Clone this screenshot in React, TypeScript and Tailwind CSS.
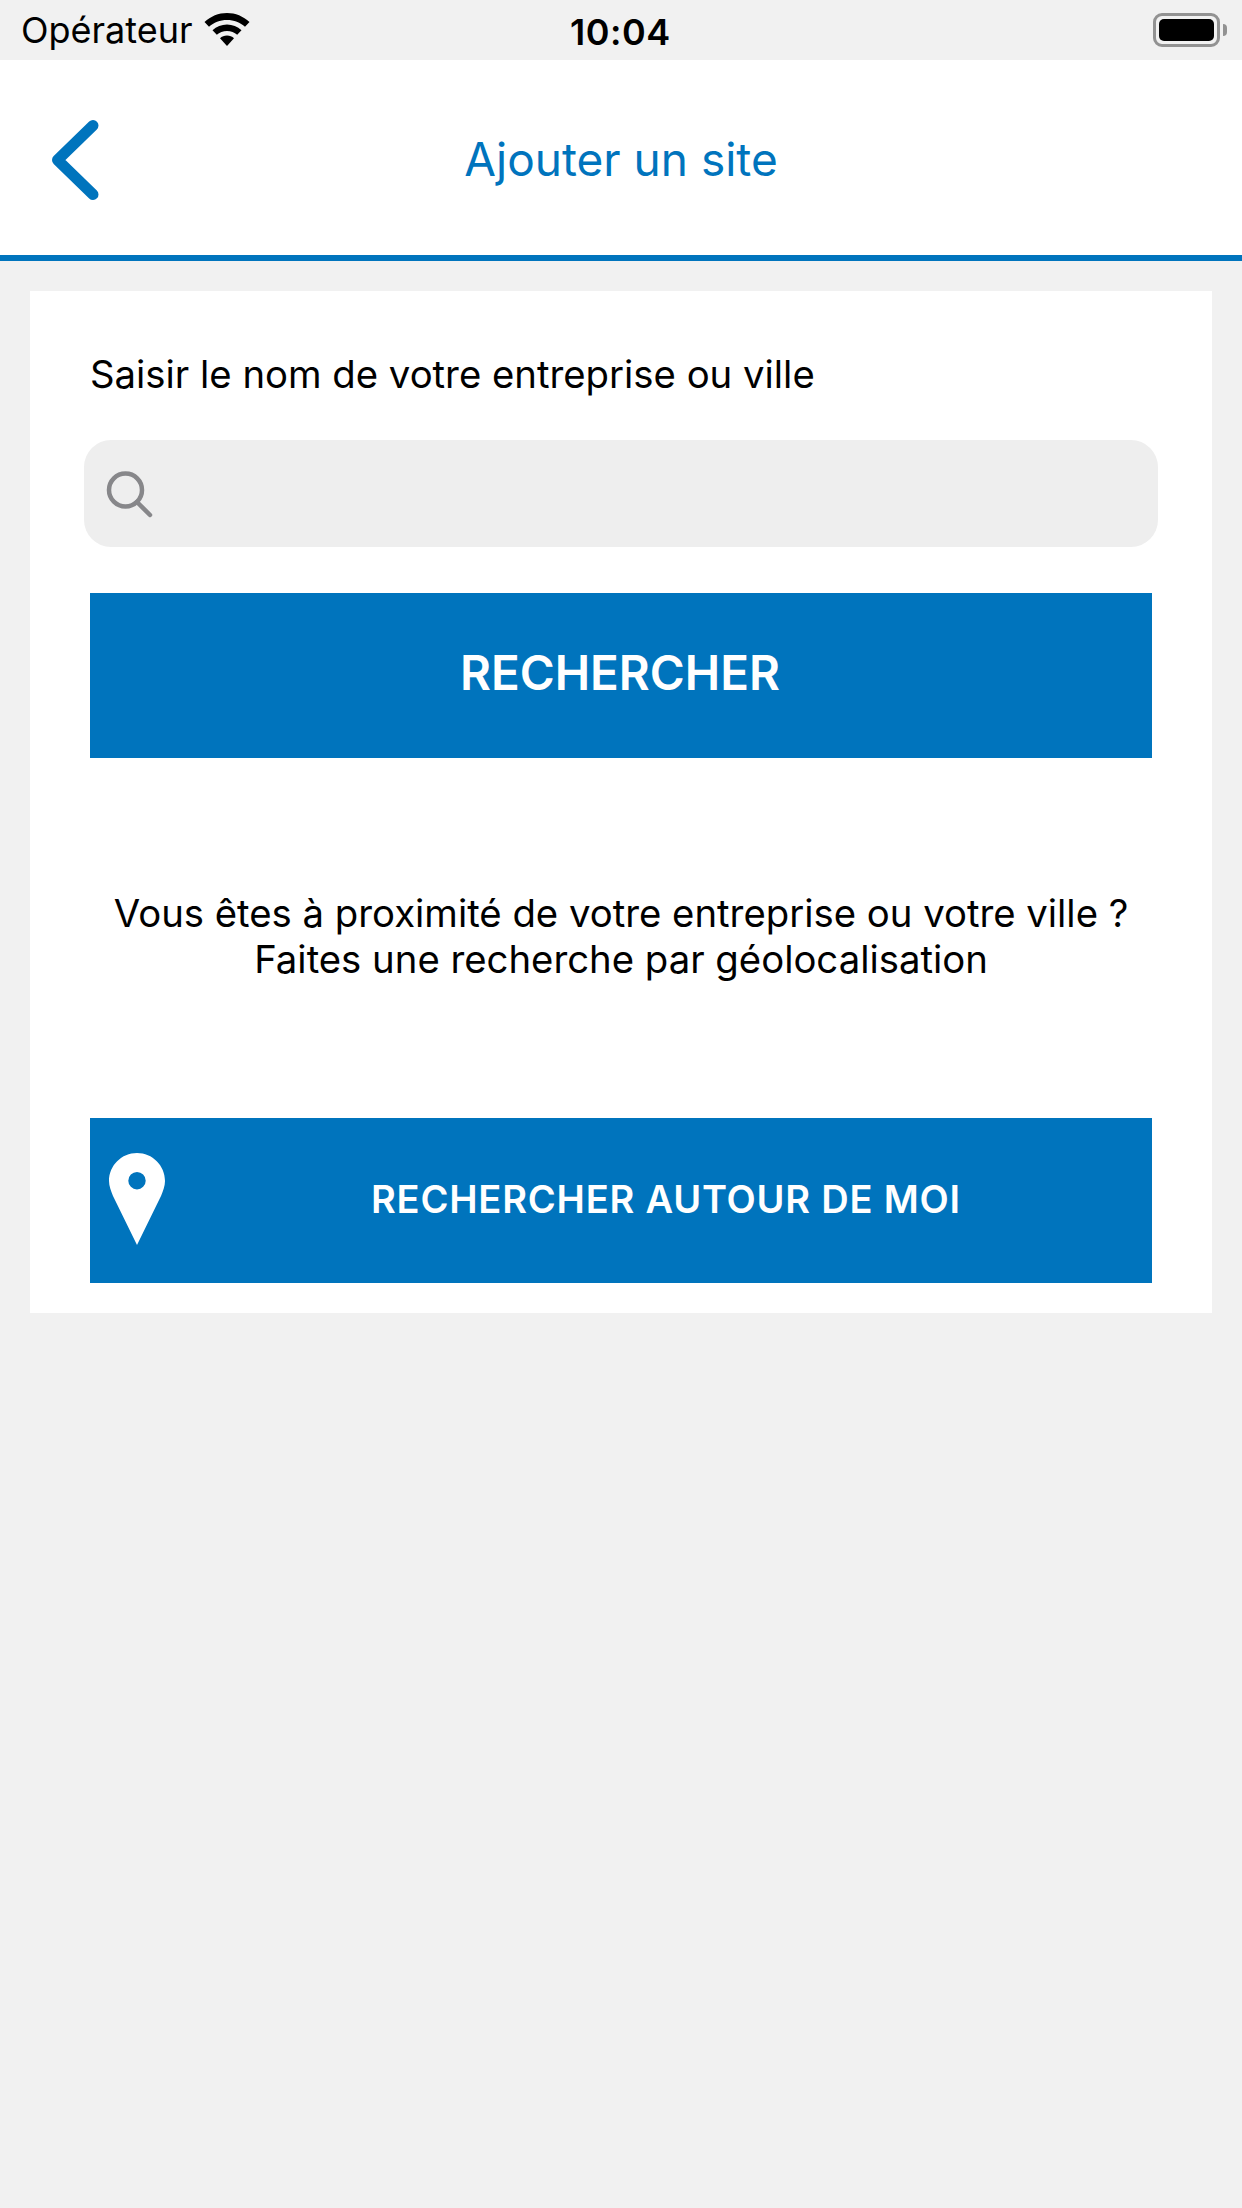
import React from 'react';

const font = { fontFamily: 'Inter, "Liberation Sans", sans-serif' };

const StatusBar = () => (
  <div className="h-[60px] bg-[#f1f1f1] flex items-center relative text-black">
    <span className="ml-[21px] text-[36px] leading-[62px]">Opérateur</span>
    <svg className="ml-[11px]" width="46" height="34" viewBox="0 0 46 34" fill="#000">
      <path d="M23 0C14.500 0 6.700 3.300 0.500 9L5 13.800C9.700 9.400 16 7 23 7C30 7 36.300 9.400 41 13.800L45.500 9C39.300 3.300 31.500 0 23 0Z" />
      <path d="M23 11.500C17.500 11.500 12.500 13.700 8.500 17.200L12.800 21.800C15.500 19.300 19 18 23 18C27 18 30.500 19.300 33.200 21.800L37.500 17.200C33.500 13.700 28.500 11.500 23 11.500Z" />
      <path d="M23 22.500C20.300 22.500 17.800 23.500 16 25.300L23 33L30 25.300C28.200 23.500 25.700 22.500 23 22.500Z" />
    </svg>
    <span className="absolute left-[570px] top-0 text-[36px] leading-[64px] font-semibold tracking-[0.5px]">10:04</span>
    <div className="absolute left-[1153px] top-[13px] flex items-center">
      <div className="w-[67px] h-[34px] rounded-[9px] border-[3px] border-[#929292] p-[3px]">
        <div className="w-full h-full bg-black rounded-[5px]" />
      </div>
      <div className="ml-[3px] w-[4px] h-[12px] bg-[#929292] rounded-r-[4px]" />
    </div>
  </div>
);

const App = () => {
  return (
    <div className="w-[1242px] h-[2208px] bg-[#f1f1f1] overflow-hidden" style={font}>
      <StatusBar />
      <div className="h-[201px] bg-white border-b-[6px] border-[#0074bd] flex items-center relative">
        <svg className="absolute left-[52px] top-[60px]" width="48" height="80" viewBox="0 0 48 80" fill="none">
          <path d="M41 5.500L5.500 40L41 74.500" stroke="#0074bd" strokeWidth="11" strokeLinecap="round" strokeLinejoin="round" />
        </svg>
        <div className="w-full text-center text-[#0074bd] text-[46px] leading-[60px] mt-[2px]">Ajouter un site</div>
      </div>
      <div className="mx-[30px] mt-[30px] h-[1022px] bg-white px-[60px] flex flex-col">
        <div className="mt-[59px] text-[38.300px] leading-[48px] text-black">Saisir le nom de votre entreprise ou ville</div>
        <div className="mt-[42px] -mx-[6px] h-[107px] rounded-[27px] bg-[#eeeeee] flex items-center pl-[22px]">
          <svg className="mt-[2px]" width="48" height="48" viewBox="0 0 48 48" fill="none" stroke="#87878a" strokeWidth="4.500" strokeLinecap="round">
            <circle cx="19.500" cy="19" r="16.500" />
            <path d="M31 31L44 44" />
          </svg>
        </div>
        <div className="mt-[46px] h-[165px] bg-[#0074bd] flex items-center justify-center text-white text-[47.500px] font-semibold pb-[6px] pr-[2px]">RECHERCHER</div>
        <div className="mt-[132px] text-center text-[38.300px] leading-[46px] text-black">
          Vous êtes à proximité de votre entreprise ou votre ville ?<br />
          Faites une recherche par géolocalisation
        </div>
        <div className="mt-[136px] h-[165px] bg-[#0074bd] flex items-center relative text-white">
          <svg className="absolute left-[19px] top-[35px]" width="56" height="92" viewBox="0 0 56 92" fill="#fff" fillRule="evenodd">
            <path d="M28 0C12.500 0 0 12.500 0 28C0 33 2 38 4 43L28 92L52 43C54 38 56 33 56 28C56 12.500 43.500 0 28 0ZM28 19A8.700 8.700 0 1 1 28 36.400A8.700 8.700 0 1 1 28 19Z" />
          </svg>
          <span className="ml-[281px] text-[38px] font-semibold tracking-[0.8px] pb-[2px]">RECHERCHER AUTOUR DE MOI</span>
        </div>
      </div>
    </div>
  );
};

export default App;
